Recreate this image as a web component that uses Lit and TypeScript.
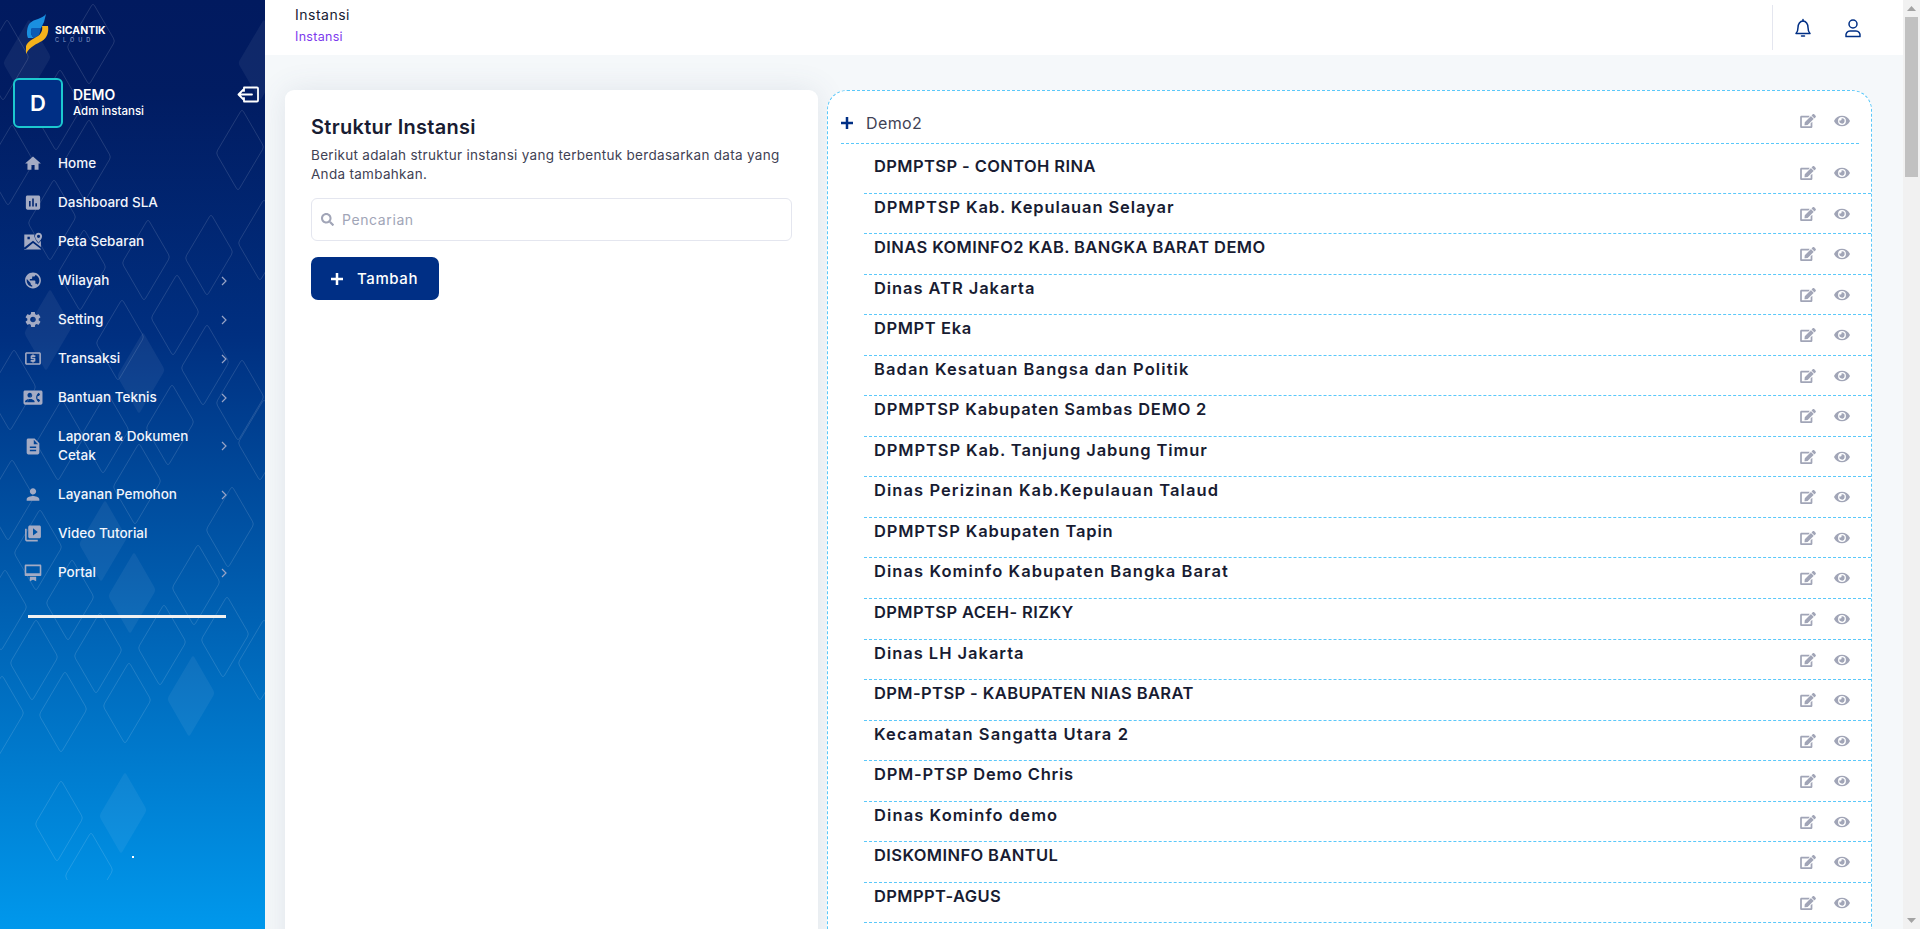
import { LitElement, html, css, svg } from "lit";
import { customElement } from "lit/decorators.js";

const ICONS: Record<string, string> = {
  home: "M10 20v-6h4v6h5v-8h3L12 3 2 12h3v8z",
  sla: "M19 3H5c-1.100 0-2 .9-2 2v14c0 1.100.9 2 2 2h14c1.100 0 2-.9 2-2V5c0-1.100-.9-2-2-2zM9 17H7v-7h2v7zm4 0h-2V7h2v10zm4 0h-2v-4h2v4z",
  map: "M1 3h12.500c-.3 3.500 2.500 8 5.500 11.500l3-3.500v11H1zM5 6v3h3V6zM1 19.500l11-8.500 10 8v2.500l-10-7.500-9 7.500H1zM19 1c-2.500 0-4.500 2-4.500 4.500 0 3 3 6 4.500 8 1.500-2 4.500-5 4.500-8C23.500 3 21.500 1 19 1zm0 6.500a2 2 0 1 1 0-4 2 2 0 0 1 0 4z",
  globe: "M12 2C6.480 2 2 6.480 2 12s4.480 10 10 10 10-4.480 10-10S17.520 2 12 2zm-1 17.930c-3.950-.490-7-3.850-7-7.930 0-.620.080-1.210.210-1.790L9 15v1c0 1.100.900 2 2 2v1.930zm6.900-2.540c-.260-.810-1-1.390-1.900-1.390h-1v-3c0-.550-.450-1-1-1H8v-2h2c.550 0 1-.450 1-1V7h2c1.100 0 2-.900 2-2v-.410c2.930 1.190 5 4.060 5 7.410 0 2.080-.800 3.970-2.100 5.390z",
  gear: "M19.140 12.940c.040-.300.060-.610.060-.940 0-.320-.020-.640-.070-.940l2.030-1.580c.180-.140.230-.410.120-.610l-1.920-3.320c-.120-.220-.370-.290-.590-.220l-2.390.960c-.500-.380-1.030-.700-1.620-.940l-.360-2.540c-.040-.240-.240-.410-.480-.410h-3.840c-.240 0-.430.170-.470.410l-.360 2.540c-.590.240-1.130.570-1.620.940l-2.390-.960c-.220-.080-.470 0-.590.220L2.740 8.870c-.120.210-.080.470.120.610l2.030 1.580c-.050.300-.090.630-.090.940s.020.640.070.940l-2.030 1.580c-.180.140-.230.410-.120.610l1.920 3.320c.120.220.370.290.590.220l2.390-.960c.500.380 1.030.700 1.620.940l.360 2.540c.050.240.240.410.480.410h3.840c.240 0 .440-.170.470-.410l.360-2.540c.590-.240 1.130-.560 1.620-.940l2.390.960c.220.080.470 0 .590-.220l1.920-3.320c.120-.220.070-.470-.120-.610l-2.010-1.580zM12 15.600c-1.980 0-3.600-1.620-3.600-3.600s1.620-3.600 3.600-3.600 3.600 1.620 3.600 3.600-1.620 3.600-3.600 3.600z",
  atm: "M11 17h2v-1h1c.550 0 1-.450 1-1v-3c0-.550-.450-1-1-1h-3v-1h4V8h-2V7h-2v1h-1c-.550 0-1 .450-1 1v3c0 .550.450 1 1 1h3v1H9v2h2v1zm9-13H4c-1.110 0-1.990.890-1.990 2L2 18c0 1.110.890 2 2 2h16c1.110 0 2-.890 2-2V6c0-1.110-.890-2-2-2zm0 14H4V6h16v12z",
  contact: "M22 3H2C.900 3 0 3.900 0 5v14c0 1.100.900 2 2 2h20c1.100 0 1.990-.900 1.990-2L24 5c0-1.100-.900-2-2-2zM8 6c1.660 0 3 1.340 3 3s-1.340 3-3 3-3-1.340-3-3 1.340-3 3-3zm6 12H2v-1c0-2 4-3.100 6-3.100s6 1.100 6 3.100v1zm3.850-4h1.640L21 16l-1.990 1.990c-1.310-.980-2.280-2.380-2.730-3.990-.180-.640-.280-1.310-.280-2s.100-1.360.280-2c.450-1.620 1.420-3.010 2.730-3.990L21 8l-1.510 2h-1.640c-.220.630-.350 1.300-.350 2s.130 1.370.350 2z",
  doc: "M14 2H6c-1.100 0-1.990.900-1.990 2L4 20c0 1.100.890 2 1.990 2H18c1.100 0 2-.900 2-2V8l-6-6zm2 16H8v-2h8v2zm0-4H8v-2h8v2zm-3-5V3.500L18.500 9H13z",
  person: "M12 12c2.210 0 4-1.790 4-4s-1.790-4-4-4-4 1.790-4 4 1.790 4 4 4zm0 2c-2.670 0-8 1.340-8 4v2h16v-2c0-2.660-5.330-4-8-4z",
  video: "M4 6H2v14c0 1.100.900 2 2 2h14v-2H4V6zm16-4H8c-1.100 0-2 .900-2 2v12c0 1.100.900 2 2 2h12c1.100 0 2-.900 2-2V4c0-1.100-.900-2-2-2zm-8 12.500v-9l6 4.500-6 4.500z",
  portal: "M3 2h18c.800 0 1.500.700 1.500 1.500V15c0 .800-.700 1.500-1.500 1.500H3c-.800 0-1.500-.700-1.500-1.500V3.500C1.500 2.700 2.200 2 3 2zm.500 2v9h17V4zM8 17.500h8V23l-4-2-4 2z",
};

const EDIT =
  "M402.600 83.200l90.200 90.200c3.800 3.800 3.800 10 0 13.800L274.400 405.600l-92.800 10.300c-12.400 1.400-22.900-9.100-21.500-21.500l10.300-92.800L388.800 83.200c3.800-3.800 10-3.800 13.800 0zm162-22.900l-48.800-48.800c-15.200-15.200-39.900-15.200-55.200 0l-35.400 35.400c-3.800 3.800-3.800 10 0 13.800l90.200 90.200c3.800 3.800 10 3.800 13.800 0l35.400-35.400c15.200-15.300 15.200-40 0-55.200zM384 346.200V448H64V128h229.800c3.200 0 6.200-1.300 8.500-3.500l40-40c7.600-7.600 2.200-20.500-8.500-20.500H48C21.500 64 0 85.500 0 112v352c0 26.500 21.500 48 48 48h352c26.500 0 48-21.500 48-48V306.200c0-10.700-12.900-16-20.500-8.500l-40 40c-2.200 2.300-3.500 5.300-3.500 8.500z";
const EYE =
  "M572.520 241.400C518.290 135.590 410.930 64 288 64S57.680 135.640 3.480 241.410a32.350 32.350 0 0 0 0 29.190C57.710 376.410 165.070 448 288 448s230.320-71.640 284.520-177.410a32.350 32.350 0 0 0 0-29.190zM288 400a144 144 0 1 1 144-144 143.930 143.930 0 0 1-144 144zm0-240a95.310 95.310 0 0 0-25.310 3.790 47.850 47.850 0 0 1-66.900 66.900A95.780 95.780 0 1 0 288 160z";
const SEARCH =
  "M505 442.700L405.300 343c-4.500-4.500-10.600-7-17-7H372c27.600-35.300 44-79.700 44-128C416 93.100 322.900 0 208 0S0 93.100 0 208s93.100 208 208 208c48.300 0 92.700-16.400 128-44v16.300c0 6.400 2.500 12.500 7 17l99.700 99.700c9.400 9.400 24.600 9.400 33.900 0l28.300-28.300c9.400-9.400 9.400-24.600.1-34zM208 336c-70.700 0-128-57.200-128-128 0-70.700 57.200-128 128-128 70.700 0 128 57.200 128 128 0 70.700-57.200 128-128 128z";

const DIAMOND =
  "M3.500-38.400L22.500-5.600Q24-3 22.500-.4L-.5 38.400Q-2 41-3.500 38.400L-22.500 5.600Q-24 3-22.500.4L.5-38.400Q2-41 3.500-38.400Z";

const OUTLINES = [
  [91, 44], [58, 110], [87, 160], [52, 220], [146, 260], [209, 255], [82, 270], [5, 60], [10, 165],
  [175, 315], [205, 365], [170, 425], [137, 484], [230, 527], [196, 585], [38, 550], [12, 390],
  [60, 440], [10, 500], [105, 433], [3, 610], [120, 340], [240, 150], [240, 400], [70, 600],
  [34, 660], [98, 653], [162, 645], [225, 637], [63, 712], [127, 703], [0, 716], [59, 821], [89, 873],
  [262, 240], [262, 440], [262, 660],
];
const FILLED = [
  [27, 60], [48, 330], [141, 373], [103, 541], [132, 593], [191, 696], [123, 813], [262, 60],
];

const MENU = [
  { label: "Home", icon: "home" },
  { label: "Dashboard SLA", icon: "sla" },
  { label: "Peta Sebaran", icon: "map" },
  { label: "Wilayah", icon: "globe", more: true },
  { label: "Setting", icon: "gear", more: true },
  { label: "Transaksi", icon: "atm", more: true },
  { label: "Bantuan Teknis", icon: "contact", more: true },
  { label: "Laporan & Dokumen Cetak", icon: "doc", more: true },
  { label: "Layanan Pemohon", icon: "person", more: true },
  { label: "Video Tutorial", icon: "video" },
  { label: "Portal", icon: "portal", more: true },
];

const INSTANSI = [
  "DPMPTSP - CONTOH RINA",
  "DPMPTSP Kab. Kepulauan Selayar",
  "DINAS KOMINFO2 KAB. BANGKA BARAT DEMO",
  "Dinas ATR Jakarta",
  "DPMPT Eka",
  "Badan Kesatuan Bangsa dan Politik",
  "DPMPTSP Kabupaten Sambas DEMO 2",
  "DPMPTSP Kab. Tanjung Jabung Timur",
  "Dinas Perizinan Kab.Kepulauan Talaud",
  "DPMPTSP Kabupaten Tapin",
  "Dinas Kominfo Kabupaten Bangka Barat",
  "DPMPTSP ACEH- RIZKY",
  "Dinas LH Jakarta",
  "DPM-PTSP - KABUPATEN NIAS BARAT",
  "Kecamatan Sangatta Utara 2",
  "DPM-PTSP Demo Chris",
  "Dinas Kominfo demo",
  "DISKOMINFO BANTUL",
  "DPMPPT-AGUS",
  "Dinas KOMINFO",
];

// capitals run narrower than lowercase in the look we are after, so tracking follows the caps share
function tracking(name: string) {
  const letters = name.replace(/[^A-Za-z]/g, "");
  const caps = name.replace(/[^A-Z]/g, "");
  return (1.2 - (0.8 * caps.length) / letters.length).toFixed(2);
}

@customElement("app-root")
export class AppRoot extends LitElement {
  static styles = css`
    :host {
      display: flex;
      height: 100vh;
      overflow: hidden;
      background: #f5f8fa;
      font-family: Inter, "Noto Sans", sans-serif;
      color: #181c32;
    }
    .sidebar {
      position: relative;
      width: 265px;
      flex: none;
      overflow: hidden;
      background: linear-gradient(180deg, #011a5f 0%, #011c62 10%, #002f80 36%, #0064b6 68%, #0098ec 100%);
      color: #f2f5fc;
    }
    .pattern {
      position: absolute;
      left: 0;
      top: 0;
    }
    .side-content {
      position: relative;
      display: flex;
      flex-direction: column;
    }
    .logo {
      display: flex;
      gap: 6px;
      height: 78px;
      padding: 14px 0 0 25px;
      box-sizing: border-box;
    }
    .logo-text {
      padding-top: 10px;
      color: #fff;
      font-size: 10.500px;
      font-weight: 700;
      line-height: 13px;
    }
    .logo-text small {
      display: block;
      color: #8ea3d0;
      font-size: 5.500px;
      font-weight: 400;
      line-height: 7px;
      letter-spacing: 4px;
    }
    .profile {
      display: flex;
      align-items: center;
      gap: 10px;
      height: 50px;
      padding: 0 6px 0 13px;
    }
    .logout {
      align-self: flex-start;
      margin-top: 8px;
    }
    .avatar {
      display: flex;
      align-items: center;
      justify-content: center;
      width: 50px;
      height: 50px;
      box-sizing: border-box;
      border: 2px solid #1cc8cf;
      border-radius: 6px;
      background: #002f85;
      color: #fff;
      font-size: 22px;
      font-weight: 600;
    }
    .who {
      flex: 1;
      color: #fff;
      font-size: 14px;
      font-weight: 600;
      line-height: 16px;
    }
    .who small {
      display: block;
      font-size: 11.500px;
      font-weight: 500;
    }
    .menu {
      display: flex;
      flex-direction: column;
      margin-top: 16px;
    }
    .item {
      display: flex;
      align-items: center;
      padding: 10px 38px 10px 23px;
      font-size: 13.500px;
      font-weight: 500;
      line-height: 19px;
    }
    .item .ic {
      width: 20px;
      height: 19px;
      flex: none;
      margin-right: 15px;
      fill: #a4abc4;
      fill-rule: evenodd;
      overflow: visible;
    }
    .item span {
      flex: 1;
      max-width: 145px;
    }
    .chev {
      width: 6px;
      height: 10px;
      flex: none;
      margin-left: auto;
      fill: none;
      stroke: #98a4c6;
      stroke-width: 1.200;
    }
    .rule {
      height: 3px;
      margin: 23px 39px 0 28px;
      background: #f1f1f1;
    }
    .main {
      flex: 1;
      min-width: 0;
      display: flex;
      flex-direction: column;
    }
    .topbar {
      display: flex;
      align-items: center;
      justify-content: space-between;
      height: 55px;
      flex: none;
      padding-left: 30px;
      background: #fff;
    }
    .crumb {
      padding-bottom: 3px;
      font-size: 14px;
      line-height: 22px;
      letter-spacing: 0.5px;
    }
    .crumb small {
      display: block;
      color: #7c3aed;
      font-size: 12.500px;
      line-height: 22px;
      letter-spacing: 0.3px;
    }
    .actions {
      display: flex;
      align-items: center;
      gap: 30px;
      height: 45px;
      padding: 0 40px 0 20px;
      border-left: 1px solid #e4e6ef;
    }
    .actions svg {
      width: 20px;
      height: 20px;
      fill: none;
      stroke: #002f85;
      stroke-width: 1.500;
      stroke-linecap: round;
      stroke-linejoin: round;
    }
    .body {
      flex: 1;
      min-height: 0;
      display: grid;
      grid-template-columns: 533px 1fr;
      gap: 9px;
      padding: 35px 31px 0 20px;
    }
    .card {
      padding: 24px 26px;
      border-radius: 9px 9px 0 0;
      background: #fff;
      box-shadow: 0 0 30px rgba(76, 87, 125, 0.12);
    }
    h2 {
      margin: 0 0 6px;
      font-size: 20px;
      font-weight: 600;
      line-height: 26px;
      letter-spacing: 0.3px;
    }
    p {
      margin: 0 0 14px;
      color: #3f4254;
      font-size: 13.500px;
      line-height: 19px;
      letter-spacing: 0.3px;
    }
    .search {
      display: flex;
      align-items: center;
      gap: 8px;
      height: 43px;
      box-sizing: border-box;
      padding-left: 9px;
      border: 1px solid #e4e6ef;
      border-radius: 6px;
      color: #a1a5b7;
      font-size: 14px;
      letter-spacing: 0.6px;
    }
    .search svg {
      width: 13px;
      height: 13px;
      fill: #a1a5b7;
    }
    .btn {
      display: inline-flex;
      align-items: center;
      gap: 14px;
      height: 43px;
      margin-top: 16px;
      padding: 0 21px 0 20px;
      border-radius: 7px;
      background: #002f85;
      color: #fff;
      font-size: 15px;
      font-weight: 500;
      letter-spacing: 0.6px;
    }
    .btn svg {
      width: 12px;
      height: 12px;
      stroke: #fff;
      stroke-width: 2.500;
    }
    .tree {
      min-width: 0;
      padding: 0 0 0 13px;
      border: dashed #5ac8fa;
      border-width: 1px 1px 0;
      border-radius: 20px 20px 0 0;
      background: #fff;
    }
    .root {
      display: flex;
      align-items: center;
      height: 53px;
      padding-top: 12px;
      margin-right: 12px;
      border-bottom: 1px dashed #5ac8fa;
      color: #3f4254;
      font-size: 16px;
      letter-spacing: 0.4px;
      box-sizing: border-box;
    }
    .root > svg {
      width: 12px;
      height: 12px;
      margin-right: 13px;
      stroke: #002f85;
      stroke-width: 2.500;
    }
    .root .tools {
      margin-top: -4px;
    }
    .tools {
      display: flex;
      gap: 18px;
      margin-left: auto;
      padding-right: 9px;
    }
    .tools svg {
      width: 16px;
      height: 14px;
      fill: #a1a5b7;
    }
    .node {
      display: flex;
      height: 40.560px;
      box-sizing: border-box;
      margin-left: 23px;
      padding-left: 10px;
      border-bottom: 1px dashed #5ac8fa;
      font-size: 16.500px;
      font-weight: 600;
      line-height: 26px;
    }
    .node.first {
      height: 49.500px;
      padding-top: 9px;
    }
    .node .tools {
      padding-top: 13px;
      padding-right: 21px;
    }
    .scroll {
      position: relative;
      width: 17px;
      flex: none;
      background: #f1f1f1;
    }
    .scroll i {
      display: block;
      height: 160px;
      margin: 17px 2px 0;
      background: #c1c1c1;
    }
    .scroll svg {
      position: absolute;
      left: 4px;
      width: 9px;
      height: 5px;
      fill: #a3a3a3;
    }
    .scroll .up {
      top: 6px;
    }
    .scroll .down {
      bottom: 6px;
      transform: rotate(180deg);
    }
    .dot {
      position: absolute;
      left: 132px;
      top: 856px;
      width: 2px;
      height: 2px;
      background: #fff;
    }
  `;

  pattern() {
    return html`<svg class="pattern" width="265" height="880" viewBox="0 0 265 880">
      ${OUTLINES.map(
        ([x, y]) =>
          svg`<path d=${DIAMOND} transform="translate(${x} ${y})" fill="none" stroke="rgba(255,255,255,.13)"></path>`
      )}
      ${FILLED.map(
        ([x, y]) => svg`<path d=${DIAMOND} transform="translate(${x} ${y})" fill="rgba(255,255,255,.06)"></path>`
      )}
    </svg>`;
  }

  tools() {
    return html`<div class="tools">
      <svg viewBox="0 0 576 512"><path d=${EDIT}></path></svg>
      <svg viewBox="0 0 576 512"><path d=${EYE}></path></svg>
    </div>`;
  }

  plus() {
    return html`<svg viewBox="0 0 12 12"><path d="M6 0v12M0 6h12"></path></svg>`;
  }

  render() {
    return html`
      <aside class="sidebar">
        ${this.pattern()}
        <div class="dot"></div>
        <div class="side-content">
          <div class="logo">
            <svg width="24" height="41" viewBox="0 0 24 41">
              <path d="M21 0 L19 8 L16 14 L7 14 C5 17 6 22 9 24 L3 24 C1 20 2 12 5 9 C9 5 17 5 21 0Z" fill="#1a8fe0"></path>
              <path d="M7 14 L16 14 C15 17 15 19 14 21 L9 24 C6 22 5 17 7 14Z" fill="#0b5bb5"></path>
              <path d="M17 12 L23 12 C24 18 22 24 17 27 C12 30 5 32 1 40 L1 32 C3 27 8 25 13 22 C16 20 18 16 17 12Z" fill="#f5b21b"></path>
            </svg>
            <div class="logo-text">SICANTIK<small>CLOUD</small></div>
          </div>
          <div class="profile">
            <div class="avatar">D</div>
            <div class="who">DEMO<small>Adm instansi</small></div>
            <svg class="logout" width="22" height="17" viewBox="0 0 22 17" fill="none" stroke="#fff" stroke-width="1.800" stroke-linejoin="round" stroke-linecap="round">
              <path d="M7 1.500h13a1 1 0 0 1 1 1v12a1 1 0 0 1-1 1H7v-3.500M7 5v-3.500M15 8.500H2M6.500 3.500l-5 5 5 5"></path>
            </svg>
          </div>
          <nav class="menu">
            ${MENU.map(
              (m) => html`<div class="item">
                <svg class="ic" viewBox="0 0 24 24"><path d=${ICONS[m.icon]}></path></svg>
                <span>${m.label}</span>
                ${m.more
                  ? html`<svg class="chev" viewBox="0 0 6 10"><path d="M1 1l4 4-4 4"></path></svg>`
                  : ""}
              </div>`
            )}
          </nav>
          <div class="rule"></div>
        </div>
      </aside>
      <div class="main">
        <header class="topbar">
          <div class="crumb">Instansi<small>Instansi</small></div>
          <div class="actions">
            <svg viewBox="0 0 20 20">
              <path d="M3 15.500c1.500-1.500 2-3 2-6 0-3.500 2-6.500 5-6.500s5 3 5 6.500c0 3 .5 4.500 2 6z"></path>
              <path d="M10 1.500V3M8.500 18h3"></path>
            </svg>
            <svg viewBox="0 0 20 20">
              <circle cx="10" cy="6" r="4"></circle>
              <path d="M3 18.500c-.6-3.500 1.500-5.500 4-5.500h6c2.500 0 4.600 2 4 5.500z"></path>
            </svg>
          </div>
        </header>
        <div class="body">
          <section class="card">
            <h2>Struktur Instansi</h2>
            <p>Berikut adalah struktur instansi yang terbentuk berdasarkan data yang Anda tambahkan.</p>
            <div class="search">
              <svg viewBox="0 0 512 512"><path d=${SEARCH}></path></svg>
              Pencarian
            </div>
            <div class="btn">${this.plus()} Tambah</div>
          </section>
          <section class="tree">
            <div class="root">${this.plus()} Demo2 ${this.tools()}</div>
            ${INSTANSI.map(
              (name, i) => html`<div class="node ${i === 0 ? "first" : ""}">
                <span style="letter-spacing:${tracking(name)}px">${name}</span> ${this.tools()}
              </div>`
            )}
          </section>
        </div>
      </div>
      <div class="scroll">
        <svg class="up" viewBox="0 0 9 5"><path d="M4.500 0L9 5H0z"></path></svg>
        <i></i>
        <svg class="down" viewBox="0 0 9 5"><path d="M4.500 0L9 5H0z"></path></svg>
      </div>
    `;
  }
}
